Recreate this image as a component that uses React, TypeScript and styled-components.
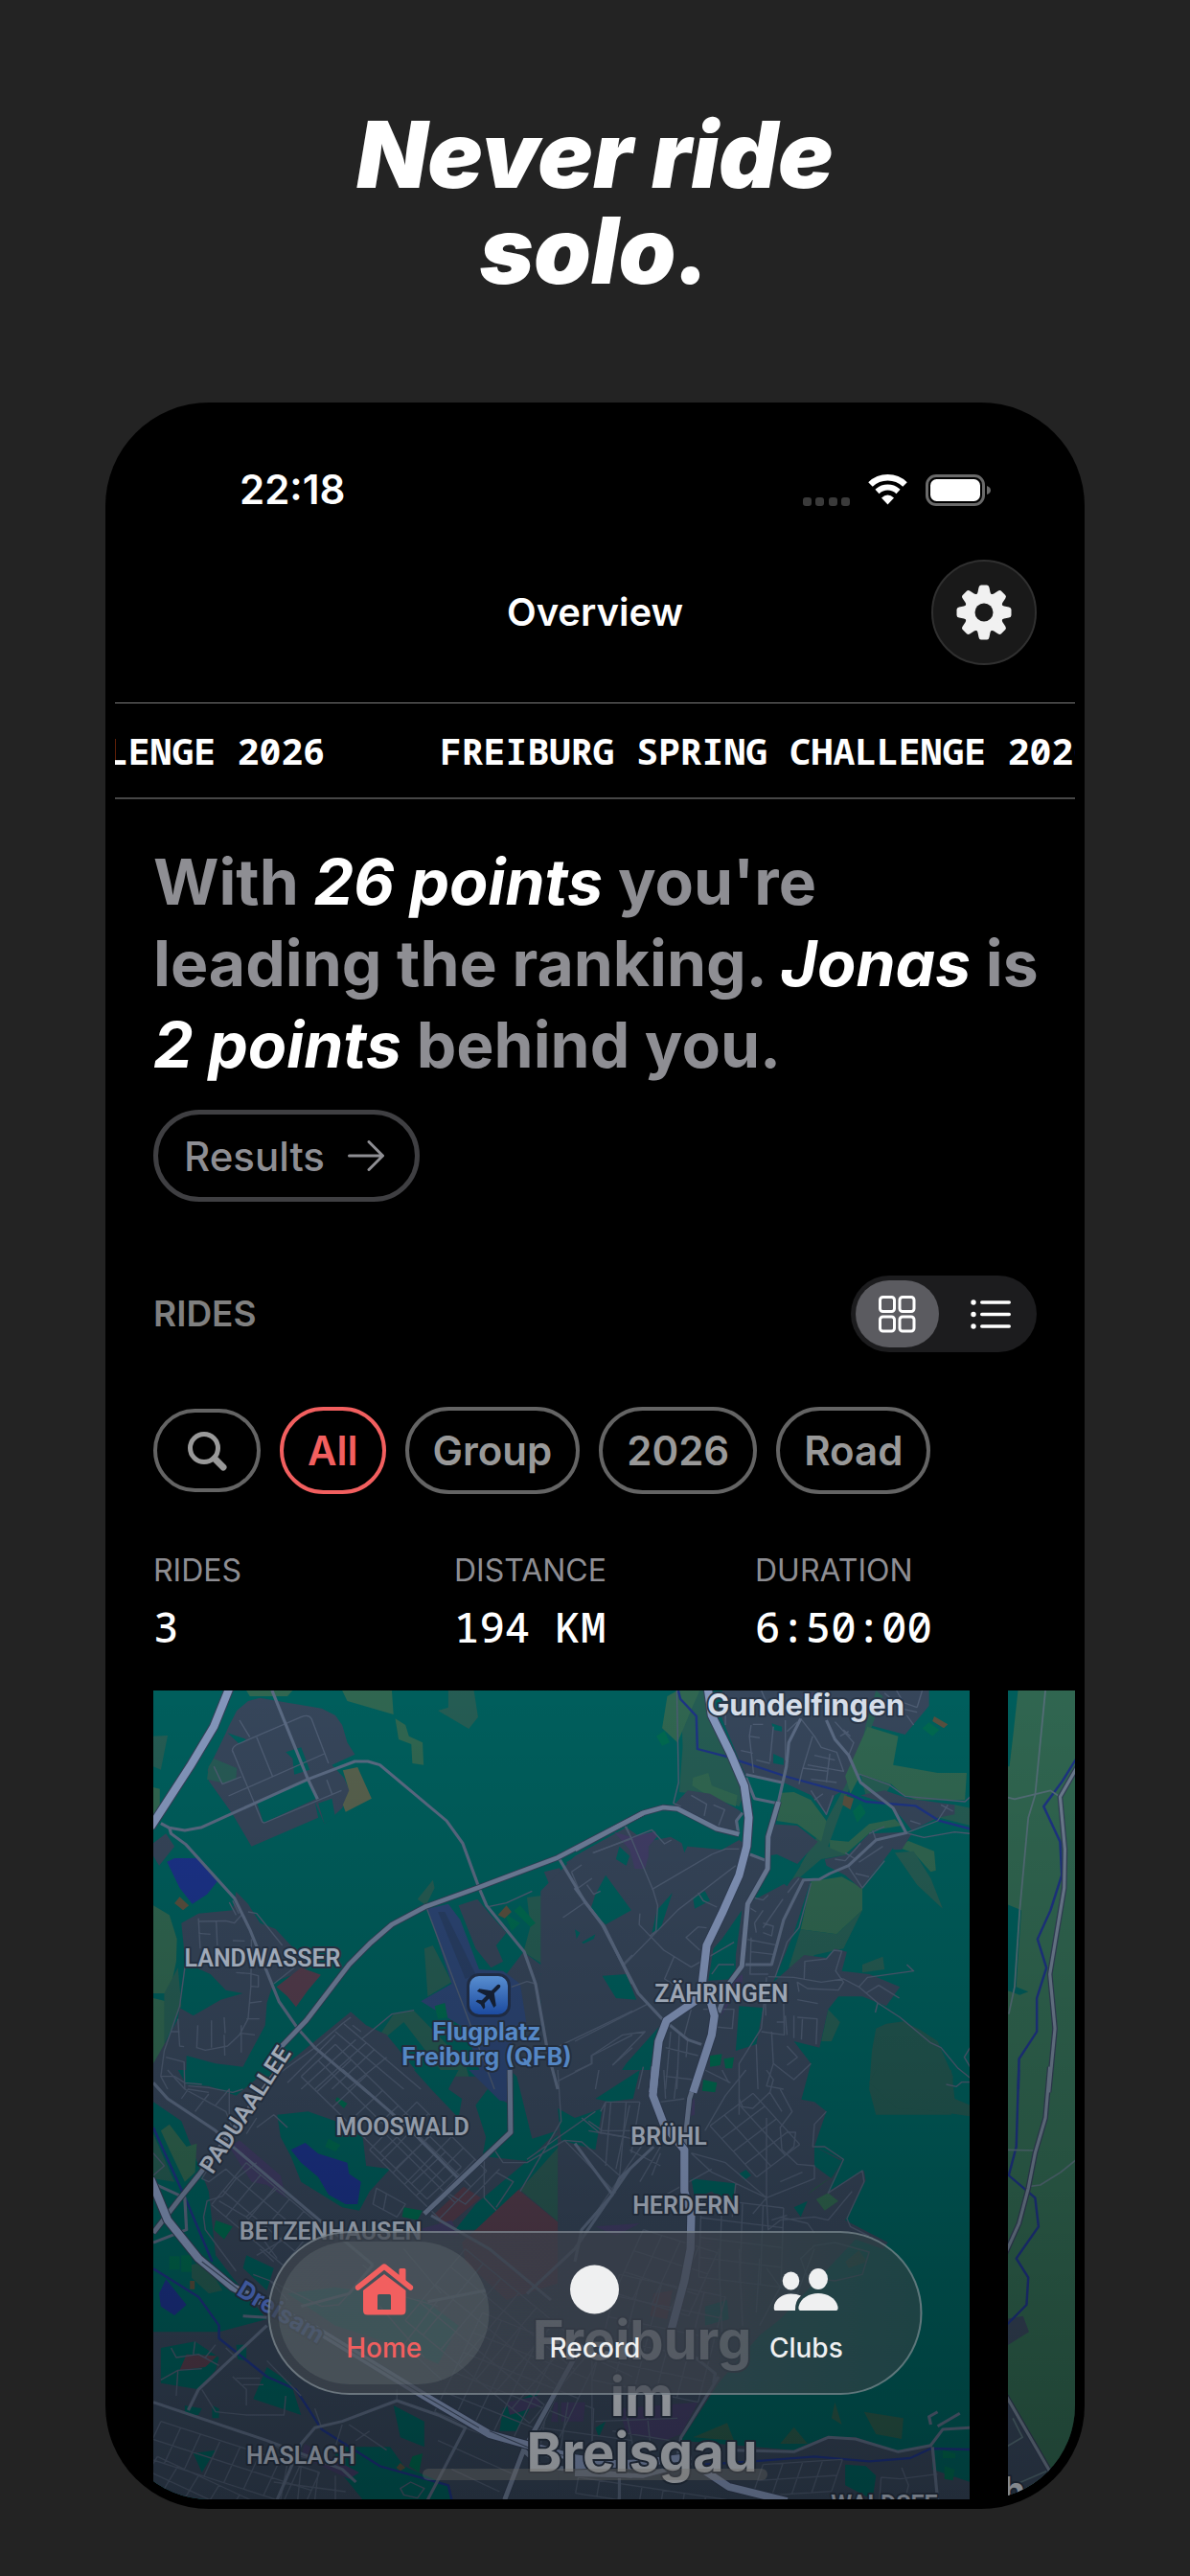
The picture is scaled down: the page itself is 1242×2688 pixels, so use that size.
import React from "react";
import styled, { createGlobalStyle, css } from "styled-components";

const GlobalStyle = createGlobalStyle`
  *, *::before, *::after { box-sizing: border-box; }
  body {
    margin: 0;
    background: #232323;
    color: #fff;
    font-family: Inter, "Liberation Sans", sans-serif;
    -webkit-font-smoothing: antialiased;
  }
  h1, h2, p, dl, dd { margin: 0; }
  button { font: inherit; color: inherit; background: none; border: 0; padding: 0; cursor: pointer; }
  a { color: inherit; text-decoration: none; }
  svg { display: block; }
`;

const gray = "#8e8e93";
const accent = "#f25f5f";
const mono = `"Noto Sans Mono", "DejaVu Sans Mono", "Liberation Mono", monospace`;

/* ---------- Page and device ---------- */

const Page = styled.main`
  display: flex;
  flex-direction: column;
  height: 100vh;
  min-height: 1800px;
  padding: 111px 110px 70px;
  overflow: hidden;
`;

const Headline = styled.h1`
  max-width: 600px;
  margin: 0 auto 109px;
  font-size: 96px;
  font-weight: 900;
  font-style: italic;
  line-height: 100px;
  text-align: center;
`;

const Phone = styled.div`
  flex: 1;
  min-height: 0;
  display: flex;
  padding: 10px;
  border-radius: 108px;
  background: #000;
`;

const Screen = styled.div`
  position: relative;
  flex: 1;
  min-width: 0;
  display: flex;
  flex-direction: column;
  overflow: hidden;
  border-radius: 98px;
`;

/* ---------- Top of the screen ---------- */

const StatusBar = styled.div`
  display: flex;
  align-items: center;
  justify-content: space-between;
  padding: 56px 88px 0 130px;
  font-size: 42px;
  font-weight: 600;
  line-height: 50px;
`;

const StatusIcons = styled.div`
  display: flex;
  align-items: center;
  gap: 19px;
`;

const Header = styled.header`
  display: grid;
  grid-template-columns: 1fr auto 1fr;
  align-items: center;
  padding: 48px 40px 39px;
`;

const Title = styled.h2`
  grid-column: 2;
  font-size: 40px;
  font-weight: 600;
  line-height: 50px;
`;

const RoundButton = styled.button`
  justify-self: end;
  display: grid;
  place-items: center;
  width: 110px;
  height: 110px;
  border: 2px solid #303030;
  border-radius: 50%;
  background: #191919;
`;

const Ticker = styled.div`
  overflow: hidden;
  border-top: 1px solid #7d7d7d;
  border-bottom: 2px solid #464646;
`;

const TickerTrack = styled.div`
  display: flex;
  gap: 120px;
  width: max-content;
  padding: 25px 0;
  transform: translateX(-465px);
  font-family: ${mono};
  font-size: 38px;
  font-weight: 700;
  line-height: 48px;
  white-space: nowrap;
`;

/* ---------- Body ---------- */

const Body = styled.section`
  padding: 44px 40px 0;
`;

const Summary = styled.p`
  margin-right: -20px;
  color: ${gray};
  font-size: 66px;
  font-weight: 700;
  line-height: 85px;

  em { color: #fff; font-style: italic; }
`;

const ResultsButton = styled.button`
  display: inline-flex;
  align-items: center;
  gap: 24px;
  height: 96px;
  margin-top: 25px;
  padding: 0 32px 0 27px;
  border: 5px solid #3f3f42;
  border-radius: 48px;
  color: ${gray};
  font-size: 42px;
  font-weight: 500;
`;

const SectionHead = styled.div`
  display: flex;
  align-items: center;
  justify-content: space-between;
  margin-top: 77px;
`;

const SectionTitle = styled.h2`
  color: #808080;
  font-size: 37px;
  font-weight: 600;
  line-height: 50px;
`;

const Segmented = styled.div`
  display: flex;
  height: 80px;
  border-radius: 40px;
  background: #1c1c1e;
`;

const Segment = styled.button`
  width: 97px;
  padding: 5px;
`;

const Thumb = styled.span<{ $on?: boolean }>`
  display: grid;
  place-items: center;
  height: 70px;
  border-radius: 35px;
  background: ${(p) => (p.$on ? "#5b5b60" : "transparent")};
`;

const Chips = styled.div`
  display: flex;
  align-items: center;
  gap: 20px;
  margin-top: 57px;
`;

const Chip = styled.button<{ $active?: boolean; $icon?: boolean }>`
  display: grid;
  place-items: center;
  height: 91px;
  padding: 0 25px;
  border: 4px solid ${(p) => (p.$active ? accent : "#646464")};
  border-radius: 46px;
  color: ${(p) => (p.$active ? accent : "#999")};
  font-size: 42px;
  font-weight: 600;
  ${(p) =>
    p.$icon &&
    css`
      height: 87px;
      padding: 0 31px;
    `}
`;

const Stats = styled.dl`
  display: grid;
  grid-template-columns: repeat(3, 1fr);
  gap: 20px;
  margin-top: 60px;
`;

const StatLabel = styled.dt`
  color: ${gray};
  font-size: 32px;
  line-height: 40px;
`;

const StatValue = styled.dd`
  margin-top: 13px;
  font-family: ${mono};
  font-size: 44px;
  font-weight: 500;
  line-height: 50px;
`;

const Cards = styled.div`
  flex: 1;
  min-height: 0;
  display: flex;
  gap: 40px;
  margin-top: 42px;
  padding-left: 40px;
  overflow: hidden;
`;

const RideCard = styled.article`
  flex: none;
  width: calc(100% - 110px);
  overflow: hidden;
`;

const MapSvg = styled.svg`
  width: 100%;
  height: auto;
  font-family: Roboto, Inter, sans-serif;
`;

/* ---------- Tab bar ---------- */

const TabBar = styled.nav`
  position: absolute;
  left: 50%;
  bottom: 109px;
  display: flex;
  width: 683px;
  height: 171px;
  padding: 9px;
  transform: translateX(-50%);
  border: 2px solid rgba(170, 185, 190, 0.45);
  border-radius: 86px;
  background: linear-gradient(90deg, rgba(62, 69, 77, 0.7), rgba(60, 65, 75, 0.7) 65%, rgba(42, 66, 68, 0.7));
`;

const Tab = styled.a<{ $active?: boolean }>`
  flex: 1;
  display: flex;
  flex-direction: column;
  align-items: center;
  justify-content: center;
  gap: 17px;
  border-radius: 75px;
  background: ${(p) => (p.$active ? "rgba(125, 140, 140, 0.24)" : "none")};
  color: ${(p) => (p.$active ? accent : "#eff0f1")};
  font-size: 28px;
  font-weight: 500;
  line-height: 32px;
`;

const HomeIndicator = styled.div`
  position: absolute;
  left: 50%;
  bottom: 20px;
  width: 360px;
  height: 12px;
  transform: translateX(-50%);
  border-radius: 6px;
  background: rgba(110, 105, 100, 0.35);
`;

/* ---------- Icons ---------- */

const SignalIcon = () => (
  <svg width="49" height="33" viewBox="0 0 49 33" fill="#3a3a3a">
    {[0, 13, 27, 40].map((x) => (
      <rect key={x} x={x} y="24" width="9" height="9" rx="3" />
    ))}
  </svg>
);

const WifiIcon = () => (
  <svg width="41" height="32" viewBox="0 0 41 32" fill="none" stroke="#fff">
    <path d="M2.5 10.5A26 26 0 0 1 38.500 10.500" strokeWidth="6.500" />
    <path d="M9.500 18A16 16 0 0 1 31.500 18" strokeWidth="6" />
    <path d="M20.500 31.500L14 24.500Q20.500 18.500 27 24.500Z" fill="#fff" stroke="none" />
  </svg>
);

const BatteryIcon = () => (
  <svg width="68" height="33" viewBox="0 0 68 33">
    <rect x="1.500" y="1.500" width="59" height="30" rx="9.500" fill="none" stroke="#6a6a6a" strokeWidth="3" />
    <rect x="5" y="5" width="52" height="23" rx="6.500" fill="#fff" />
    <path d="M64 12Q68 13.500 68 16.500T64 21Z" fill="#6a6a6a" />
  </svg>
);

const GearIcon = () => (
  <svg width="58" height="58" viewBox="-29 -29 58 58" fill="#f1f1f1">
    <circle r="20.500" />
    {[0, 45, 90, 135, 180, 225, 270, 315].map((a) => (
      <path
        key={a}
        transform={`rotate(${a})`}
        d="M-8.500 -18Q-7 -19 -6.500 -21L-5.500 -26Q-5 -28.500 -3 -28.500H3Q5 -28.500 5.500 -26L6.500 -21Q7 -19 8.500 -18Z"
      />
    ))}
    <circle r="9.500" fill="#191919" />
  </svg>
);

const ArrowIcon = () => (
  <svg width="38" height="32" viewBox="0 0 38 32" fill="none" stroke="currentColor" strokeWidth="3" strokeLinecap="round" strokeLinejoin="round">
    <path d="M1.500 16H36M22 1.500L36.500 16L22 30.500" />
  </svg>
);

const GridIcon = () => (
  <svg width="39" height="39" viewBox="0 0 39 39" fill="none" stroke="#fff" strokeWidth="3">
    {[1.5, 22].map((x) => [1.5, 22].map((y) => <rect key={`${x}-${y}`} x={x} y={y} width="15" height="15" rx="3" />))}
  </svg>
);

const ListIcon = () => (
  <svg width="42" height="31" viewBox="0 0 42 31" fill="#fff">
    {[3, 15.5, 28].map((y) => (
      <g key={y}>
        <circle cx="3" cy={y} r="2.700" />
        <rect x="10" y={y - 1.75} width="32" height="3.500" rx="1.750" />
      </g>
    ))}
  </svg>
);

const SearchIcon = () => (
  <svg width="42" height="42" viewBox="0 0 42 42" fill="none" stroke="currentColor" strokeLinecap="round">
    <circle cx="18" cy="18" r="14.500" strokeWidth="5" />
    <path d="M29 29L38 38" strokeWidth="7" />
  </svg>
);

const HomeIcon = () => (
  <svg width="61" height="56" viewBox="0 0 61 56" fill="currentColor">
    <path d="M3 26L30.500 4L58 26" fill="none" stroke="currentColor" strokeWidth="5.500" strokeLinecap="round" strokeLinejoin="round" />
    <path d="M46 14V7.500Q46 6 47.500 6H51.500Q53 6 53 7.500V21Z" />
    <path fillRule="evenodd" d="M8.500 29L30.500 12L53 29V50Q53 54.500 48.500 54.500H13Q8.500 54.500 8.500 50ZM25 33Q23.500 33 23.500 34.500V49H37.500V34.500Q37.500 33 36 33Z" />
  </svg>
);

const RecordIcon = () => (
  <svg width="56" height="56" viewBox="0 0 56 56" fill="currentColor">
    <circle cx="28" cy="28" r="25.500" />
  </svg>
);

const ClubsIcon = () => (
  <svg width="68" height="56" viewBox="0 -6 68 56" fill="currentColor">
    <ellipse cx="18" cy="13" rx="8.800" ry="9.500" />
    <ellipse cx="46.500" cy="11" rx="10" ry="11" />
    <path d="M28 44Q25.500 44 26 40C28 31 37 26 46.500 26C56 26 65 31 67 40Q67.500 44 65 44Z" />
    <path d="M2 44Q0 44 0 41C1 32 9 26.500 18 26.500Q24 26.500 28.500 28.500Q22 34 22.500 44Z" />
  </svg>
);

/* ---------- Map ---------- */

type Sector = "nw" | "ne" | "sw" | "se";
type Shape = [Sector, string, string];
type Line = [Sector, string];

const scale = "scale(0.35714 0.33333)";
const sectorOrigin = (offset: number): Record<Sector, string> => ({
  nw: `translate(${-60 - offset} -24) ${scale}`,
  ne: `translate(${440 - offset} -24) ${scale}`,
  sw: `translate(${-60 - offset} 396) ${scale}`,
  se: `translate(${440 - offset} 396) ${scale}`,
});

/* A skewed block of streets: nu cells along u, nv cells along v. */
const blocks = (ox: number, oy: number, ux: number, uy: number, nu: number, vx: number, vy: number, nv: number) => {
  let d = "";
  for (let i = 0; i <= nu; i++) d += `M${ox + ux * i} ${oy + uy * i}l${vx * nv} ${vy * nv}`;
  for (let j = 0; j <= nv; j++) d += `M${ox + vx * j} ${oy + vy * j}l${ux * nu} ${uy * nu}`;
  return d;
};

const land = "#00605e";
const urban = "#37475c";
const park = "#316852";
const scrub = "#265e55";
const lawn = "#006b51";
const water = "#1c348c";
const airfield = "#2d4777";
const retail = "#423f69";
const campus = "#553e4f";
const rust = "#5a5140";

const areas: Shape[] = [
  // north-west
  ["nw", park, "M720 72H865L870 147L800 125L735 105ZM875 160L905 180L915 215L955 235L958 305L925 300L922 240L885 225ZM440 72H575L560 90H450ZM168 745L215 775L237 850L235 920L215 1020H168ZM168 1035L205 1045L200 1240H168ZM168 375L187 380V440L168 460Z"],
  ["nw", scrub, "M1030 72H1105L1117 155L1090 192L1000 135L1030 125ZM168 215L210 213L190 320L168 310ZM200 1020L240 940L250 1060L200 1180ZM830 1150L870 1085L930 1075L1080 1240L1100 1320H1050L900 1110L850 1155Z"],
  ["nw", urban, "M388 185L412 135L445 105L480 95L560 110L660 128L700 150L720 180L735 235L757 272L690 305L725 345L742 385L720 440L668 490L640 420L650 470L455 560L400 460L330 355L327 320L355 260L380 205ZM205 520L230 560L185 620L168 590V550Z"],
  ["nw", land, "M470 420L620 352L645 410L490 487ZM555 265L600 250L625 320L580 335L575 285ZM650 425L690 410L700 470L715 455L668 490ZM385 205L440 225L420 240Z"],
  ["nw", "#285c57", "M345 285L412 315L410 350L375 362L325 350L330 310Z"],
  ["nw", "#59634f", "M722 322L765 312L806 410L730 452L722 430L740 385Z"],
  ["nw", water, "M208 608L230 597H300L355 670L325 710L282 740L245 690Z"],
  ["nw", rust, "M245 718L272 745L255 760L230 738Z"],
  ["nw", urban, "M410 702L445 740L480 800L525 818L570 870L640 930L580 960L520 985L500 1050L495 1120L430 1250L350 1240L265 1215L262 1400H168V1240L200 1180L240 1100L245 1065L285 1090L365 1040L430 1020L380 1010L335 960L262 925L250 800L300 770L400 760ZM745 1078L790 1120L850 1150L980 1320H500L560 1240Z"],
  ["nw", campus, "M528 1000L600 940L658 962L620 1010L585 1063L560 1030Z"],
  ["nw", scrub, "M960 880L985 870L1040 985L970 1030ZM940 725L985 665L990 690L965 745Z"],
  ["nw", urban, "M1060 745L1115 725L1150 770L1200 830L1170 870L1190 920L1155 940L1110 880ZM1310 640L1355 628L1410 740L1365 780ZM1375 610L1450 560L1505 680L1445 715ZM1445 590L1568 520V600L1500 590ZM1250 890L1300 930L1400 840L1405 755L1490 805L1600 765V1400H1210L1200 960Z"],
  ["nw", airfield, "M970 755L1030 740L1065 790L1120 945L1190 950L1240 990L1258 1110L1215 1130V1320H1140L1080 1130L950 1045L1040 990Z"],
  ["nw", "#294067", "M1000 765L1020 765L1110 960L1080 975Z"],
  ["nw", scrub, "M1260 720L1300 715L1395 780L1400 830L1340 870L1300 925L1250 890L1270 810Z"],
  ["nw", lawn, "M1195 770L1240 800L1215 825ZM1240 745L1285 800L1270 812L1222 762ZM990 1060L1020 1050L1028 1095L1000 1100Z"],
  ["nw", rust, "M1200 745L1215 765L1195 785L1175 775Z"],
  ["nw", land, "M1330 910L1385 980L1330 1010L1300 960ZM1300 1040L1355 1090L1340 1120L1305 1100Z"],
  // north-east
  ["ne", scrub, "M310 72H375L420 190L480 290L500 380L480 435L390 400L305 390L315 250Z"],
  ["ne", park, "M300 72H365L345 120L300 235L255 190L270 90ZM345 345L390 330L400 370L475 400L470 435L395 405L343 370Z"],
  ["ne", urban, "M430 72H1035V120L965 210L860 180L830 290L790 380L760 400L735 460L690 400L610 360L500 340L480 290L430 160Z"],
  ["ne", scrub, "M880 72L900 90L740 560L800 585L720 600L660 655L615 700L735 480L830 290L850 180Z"],
  ["ne", park, "M855 185L945 215L930 305L1060 330H1145L1140 415H1000L960 400L925 365L835 335L805 395L790 340ZM605 392L640 390L690 415L735 480L720 545L650 490L590 480ZM745 540L800 545L860 490L935 475L955 495L870 510L790 585L745 565ZM690 670L780 655L840 690V760L765 835L660 820ZM935 560L975 543L1050 575L1055 635L1040 640L990 580Z"],
  ["ne", scrub, "M660 820L765 835L840 760L785 880L700 900L660 950L625 940ZM935 580L990 575L1040 660L1075 755L1000 680ZM840 930L900 905L905 945L840 955ZM740 1070L775 1110L750 1170H720ZM1110 430L1155 440V495L1065 470ZM835 335L925 365L905 400L850 400Z"],
  ["ne", "#225852", "M880 1130L910 1115L960 1108L1010 1135L1060 1170L1105 1280L1100 1400H880L860 1320L868 1200Z"],
  ["ne", urban, "M570 490L650 495L710 545L650 615L590 585L560 590ZM835 400L905 385L975 410L1110 430V460L1060 470L985 510L955 470L920 430ZM730 600L800 585L860 520L965 515L905 600L835 692L790 650L735 620ZM290 430L330 385L395 395L485 450L470 510L415 500L330 460ZM935 525L985 520L955 570H930Z"],
  ["ne", urban, "M0 590L150 500L210 545L280 530L330 560L430 570L480 540L560 600V640L500 740L590 690L650 655L690 665L640 830L580 985L670 900L740 910L760 880L795 890L780 950L860 960L950 1000L910 1060L840 1030L770 1030L740 1070L715 1190L640 1170L690 1240L650 1400H-100V700Z"],
  ["ne", land, "M505 420L565 425L560 600L510 585ZM470 900L488 760L430 850L405 880L390 980L470 975ZM590 590L660 620L620 685L590 660ZM480 1060L550 1065L530 1180L470 1200ZM80 965L150 960L180 1040L120 1035ZM60 710L90 650L165 760L90 805L45 760ZM345 720L380 700L395 730L350 755ZM240 760L285 705L250 820L225 830ZM0 820L15 830L5 850ZM20 860L60 835L55 850L25 865ZM150 1240L250 1120L230 1400H0L100 1320ZM580 270L610 285V305L580 300ZM575 175L605 185V200L580 195ZM130 560L160 590L150 620L120 600ZM300 500L350 510L320 580Z"],
  ["ne", retail, "M115 515L165 530L235 512L240 530L215 560V590L205 630L175 630L160 570ZM660 85L740 72L720 110L680 105ZM465 980L490 960L490 985L425 1095Z"],
  ["ne", lawn, "M262 198L277 235L255 245L238 215ZM1015 190L1035 172L1065 195L1045 215ZM812 450L835 425L850 455L825 485ZM395 1215L430 1210L425 1245L395 1250ZM435 1225L465 1220L460 1255H440ZM370 1300L415 1300L410 1400H375Z"],
  ["ne", rust, "M787 400L815 410L805 445L782 430ZM1050 153L1090 178L1078 190L1045 168Z"],
  // south-west
  ["sw", urban, "M168 20H1450V1345H168Z"],
  ["sw", land, "M168 100L250 160L330 380L350 580L400 650L500 780L360 820H168ZM240 0H500L410 80L330 50L265 45ZM530 140L620 130L700 160L780 210L790 300L860 310L800 380L770 440L720 430L600 350L570 270L540 210ZM930 0H1060L1030 60L1070 90L1060 150L980 60ZM1110 110L1145 60L1210 110V0L1230 20L1275 215L1350 190L1260 285L1130 270L1140 210ZM1410 150L1490 120L1465 260L1400 220L1240 370L1130 500H1050L1110 420ZM190 870L290 850L360 900L350 940L300 1000L190 980ZM500 930L570 980L600 1080L460 1030ZM870 1050L960 1100V1180L890 1150ZM700 1180L860 1180L900 1240L1030 1300L1040 1345H780L700 1240ZM285 1200L350 1190L310 1260ZM560 700L700 680L960 720L1060 800L1000 920L900 870L700 800ZM440 580L520 620L500 690L430 620ZM1190 1060L1300 1000L1230 1130L1180 1130ZM1460 1100L1490 1120L1480 1150L1458 1145ZM260 1050L310 1060L300 1080H260ZM340 1050L360 1060V1090H340ZM410 860H440V910L415 905Z"],
  ["sw", airfield, "M1090 0H1205V100L1180 95Z"],
  ["sw", "#2a5a55", "M1370 220L1515 385L1390 510L1240 375Z"],
  ["sw", scrub, "M168 200L230 350L168 340Z"],
  ["sw", campus, "M1235 375L1400 520L1430 640L1200 720L1080 600L1070 540ZM985 455L1075 365L1125 400L1020 495ZM265 890L355 895L320 930L245 940Z"],
  ["sw", retail, "M420 220L540 330L555 400L500 360L455 350L390 240ZM1200 1040L1290 1020L1300 1050L1210 1080ZM1340 1040L1440 1030L1430 1110L1330 1100ZM610 1170L770 1260L740 1280L600 1210ZM940 500L1040 470L1060 520Z"],
  ["sw", park, "M190 190L215 170L265 240L295 230L290 320L260 350L220 260Z"],
  ["sw", scrub, "M280 610L320 600L370 690L330 700L280 650Z"],
  ["sw", water, "M570 250L612 228L650 262L735 290L740 325L775 350L765 420L730 420L680 390L650 335L600 290ZM185 700L205 655L265 735L230 768L190 740Z"],
  ["sw", lawn, "M900 430L955 440L940 470L895 460ZM680 215L715 235L700 255L670 240ZM705 85L735 105L725 120L700 95ZM350 470L400 490L375 530L345 500ZM215 583h30v42h-30ZM250 580h30v52h-30ZM925 1210L955 1200L945 1260L915 1240Z"],
  ["sw", rust, "M275 660h14v26h-14ZM890 1230L905 1245L890 1255L878 1245Z"],
  // south-east
  ["se", urban, "M-50 0H560L600 60L650 90L700 100L735 130L700 240L780 280L740 380L845 315L850 345L790 470L915 540L900 560L820 530L600 780L540 830L420 980L310 1160L640 1190L730 1150H820L945 1195L1040 1175L1155 1180V1345H-50Z"],
  ["se", land, "M60 90L190 0L170 90L100 100ZM340 340L470 355L460 430L400 380L350 400ZM790 1235L850 1240L880 1270L870 1345L790 1300ZM480 325L500 312L515 330L495 345ZM640 430L680 410L660 460ZM380 740L445 720L450 780L380 800ZM-50 120L0 150L80 120L60 250L-40 220ZM60 1120L90 1100L70 1150ZM1045 1170H1155V1290L1045 1250ZM700 240L780 285L750 340L700 300Z"],
  ["se", campus, "M230 700L285 690L270 780L220 770Z"],
  ["se", retail, "M130 1060L360 1040L310 1140L260 1160L150 1140ZM-40 1040L30 1040L25 1100H-40ZM60 490L190 480L120 520ZM330 100L350 90V140L320 150Z"],
  ["se", "#225852", "M880 0H1100L1110 90L1155 110V145L1030 125L940 120L860 40Z"],
  ["se", "#2a5a4c", "M770 320L680 390L700 370ZM345 1150L445 1105L465 1160ZM600 1170L640 1118L680 1170ZM760 1040L780 1110L750 1090ZM845 1070L960 1090L955 1155L880 1140ZM790 600L830 565L855 600L800 620Z"],
  ["se", park, "M705 405L740 385L770 410L730 440Z"],
  ["se", lawn, "M375 30L415 40L410 70L372 65ZM1075 1190L1112 1200V1215H1075ZM1080 1240L1110 1250L1105 1285L1080 1280Z"],
];

const rivers: Line[] = [
  ["ne", "M302 72L308 98L355 152L358 255L440 278L620 342L800 395L850 420L995 433L1065 480L1155 505"],
  ["sw", "M168 180L265 410L340 600M168 622L300 710L360 800V840L500 960L585 1000L660 1125L830 1240L1030 1300L1040 1345"],
  ["se", "M380 1235L520 1225L700 1210L860 1225L980 1215L1040 1185L1155 1188"],
];

const lanes: Line[] = [
  ["nw", "M415 240L600 155Q622 145 630 160L680 300M400 262L485 480Q488 490 500 483L718 385M415 240Q395 250 400 265M470 218L517 342M388 402L668 270M420 165L450 218M345 310L370 365L425 342M675 352L690 395M300 785L305 880M262 925L245 1060L200 1200L190 1280L210 1320M300 795L380 793L405 800L430 770M352 795L355 870M455 850L453 1000L445 1100L420 1150L385 1185L320 1198L295 1190L298 1120M338 1105V1190M375 1095L378 1145M445 765L470 770L545 870M300 832L335 835M400 855L435 856M410 955L450 958L475 965V1000L455 998M450 1050L485 1045M440 1100H478M425 1145L465 1150M425 1120V1205M375 1150L377 1215M220 1140H245M240 1100L245 1185L258 1187M205 1220L258 1235L260 1320M190 1280H230L260 1300L310 1305"],
  ["nw", "M1150 748L1200 737L1275 700M1365 783L1430 735M965 748L1165 1320M1215 1000L1260 983L1285 990M530 1275L640 1190L720 1115L745 1095M775 1165L865 1085L930 1073M700 1140L900 1320M725 1115L950 1320M600 1320L760 1165M640 1320L790 1175M690 1320L815 1195M735 1320L850 1220M750 1120L775 1140M560 1300L700 1150M1350 1295L1450 1240V1215L1568 1150M1345 1190L1568 1075M1510 1245L1568 1190M1545 495L1568 540M1390 640L1420 618M1390 640L1410 690L1450 660M1435 680L1455 710L1475 700M1540 930L1568 900M1452 580L1568 535M520 990L580 940M390 735L410 775M400 730L418 770"],
  ["ne", "M298 72L303 360L288 425L310 435M340 400L385 428L378 465M405 430L438 445L420 495M480 568H440L400 585L225 695M150 497L228 695L242 745L237 825L220 840M470 620L300 760L145 930M190 770L188 805L260 885L340 938L465 860M360 705L375 730L415 750M385 815L360 812L325 845L365 885M55 580L225 508L262 552L282 540M290 905L262 975L300 1000"],
  ["ne", "M830 333L920 368L965 403L1140 420L1155 405M968 518L1020 532L1110 515L1155 520M968 518L1060 480L1090 430M980 480L1010 490M1070 430L1105 450M515 180L510 215L522 330M580 185L570 295M510 215L540 220M615 165V290M520 178H550M660 160L700 215L720 250L765 265L785 325L680 305M695 215L665 320L655 365M700 275L760 290M745 270L735 360M690 350L765 360M665 315L740 325M800 275L815 235L760 170M785 195L805 215M775 215L800 200M485 260L520 268M440 80V180M690 385L735 460L755 400M700 415L725 395M940 72L960 110L1000 125M905 80L960 130L1000 140M970 150L990 180M1015 72L1000 125M530 290L570 300M620 200L650 170M545 72L560 110M760 600L790 605L835 550M790 580L820 600M800 625L840 690L905 605M820 645L860 655M830 610L900 560M870 510L880 540M860 520L905 498"],
  ["ne", "M515 845L512 960L565 960M500 850L585 868M515 890L580 898M525 800L530 830M525 800L550 760M550 800L580 810L575 840L550 830M690 675L655 815L620 860L585 970M608 725L550 815M500 745L530 765M520 720L550 728L565 712M565 968L640 970L720 985L785 975L830 1000L885 1050L950 1095L1040 1175L1070 1190L1120 1255L1155 1285M670 975L672 920L735 912L757 885L780 888L762 950L785 985L770 1010L680 1005L650 985L655 1015M830 1000L855 970L990 950L970 930M850 1020L888 995L948 1035M885 1050L878 1080M560 970L545 1130L480 1240V1400M610 1050L612 1150L545 1140M590 1110H610M650 1040L710 1052M650 1095L708 1100L705 1180M575 1140L580 1240L640 1290L690 1240M555 1000L558 1090M615 1090L620 1150M640 1090V1160M665 1100L662 1165M400 960L420 930L465 930M340 1070L320 1150M375 1070L465 1070L460 1130L410 1125M280 1140L265 1320M305 1150L298 1320M330 1160L325 1220M265 1190L360 1215M265 1280L345 1290M0 1170L210 1055M0 1265L48 1240V1215L140 1150L205 1140L110 1245M1155 1190L1138 1220L1155 1250M1085 1305L1115 1312L1130 1298H1155M530 1180L535 1320M620 1185L650 1220L620 1245M580 1240L560 1310L610 1320M380 1260L455 1300M200 1250L185 1320M622 705L655 660"],
  ["sw", blocks(600, 20, 46, 48, 8, 50, -50, 2) + blocks(800, 250, 34, 36, 6, 46, -50, 3) + blocks(440, 290, 42, 38, 5, -34, 44, 3)],
  ["sw", blocks(190, 1100, 58, 20, 8, -24, 56, 2) + blocks(180, 1210, 60, 30, 6, -26, 46, 2) + blocks(1080, 560, 52, 46, 7, -44, 56, 4)],
  ["sw", blocks(1130, 760, 56, 24, 6, -28, 62, 5) + "M250 90L270 60L330 70M290 130L330 75M350 110L390 60V140M270 50L330 55L400 70L430 60M210 0L260 60L380 130L400 185M470 180L520 140L560 180M440 200L470 150M400 185L310 340L330 350L380 310L410 340L370 395L325 410L315 460L320 500L410 630M410 340L470 290M360 410L440 460L530 590M440 460L530 370M480 560L520 600M470 580L550 530M820 370L905 420L880 460L810 420ZM850 385L840 440M168 260L200 300L168 330M1135 270V400L1170 440M1170 320L1220 350L1170 430M1165 250L1190 290H1260L1370 220L1520 385M1370 220L1420 225L1530 330M1440 190L1568 215M1440 160L1480 190H1568M1505 100L1490 300M1560 110L1520 310M1350 0L1360 160L1240 380M1260 280L1460 130M1020 380L1080 420L1180 310M460 640L510 660L560 720M510 660L660 740L710 735L740 700"],
  ["sw", "M190 970L240 940L310 935M240 940L235 1020M290 850L285 890M220 870L235 900L300 890L360 925M320 900L350 860M310 1000L350 1070L440 1080H550L555 1020M400 960L440 1000V1050M410 965H480M430 985H490M380 870L410 900M500 910L600 1020M640 1060L660 1120M500 1160L560 1200L680 1230M880 1000V1040M720 1110L700 1180M740 1110L850 1190M760 1160L800 1130M890 1310L920 1290L960 1310L940 1340L900 1330ZM1080 1120L1200 1170M1000 1160L1230 1270M1040 1250L1180 1320M560 1230L540 1345M600 1240L590 1345M650 1260L640 1345M700 1270V1345M520 1290L730 1320M1320 1050L1290 1230M1380 1040L1350 1240M1450 900V1240M1300 1120L1568 1160M1290 850L1410 880L1568 960M780 610L870 700L1000 740M900 560L1010 700M830 740L960 900M1000 720L900 860L1010 970"],
  ["se", blocks(395, 175, 34, 40, 4, 42, -34, 3) + blocks(370, 400, 60, 8, 4, -2, 62, 4) + blocks(200, 500, 54, 18, 4, -28, 66, 3)],
  ["se", blocks(130, 640, 62, 14, 5, -16, 66, 5) + blocks(550, 1235, 58, -4, 4, -16, 50, 2) + blocks(10, 1275, 62, 10, 7, -8, 50, 1) + "M735 130L700 170L695 240H730L785 280L740 385L840 315L845 350L795 465L805 490L860 520M480 90L490 115L520 120L570 70L580 30L560 0M570 70L605 130M600 60L635 130L600 180L605 250L650 295L700 300V340L560 400L520 450M560 400L440 290L340 260M500 0L440 80L380 190M450 40L430 0M620 195L645 195L640 240L620 260M560 150V400L565 500L600 470L700 460L740 470L810 380M600 460L680 480L700 510M575 470L620 455M600 350L665 320M470 355L460 460M340 260L400 320L560 400M70 0L60 60M90 100L75 200M150 100L130 340M190 100L165 260M90 100H190M75 130L90 100M260 0L265 90M300 0L290 90M250 100L320 90M20 150L70 195L150 210M250 260L225 330M160 250L250 300M250 240L190 350M200 430L400 310M40 480L200 230M680 650L660 590L700 550L760 540L860 570L840 640L760 660ZM700 560L650 700L600 680L560 620M600 680L540 800M420 560L430 820M480 560L490 800M540 590L530 760M955 1245L975 1300L965 1345M895 1275L950 1280L1060 1265M895 1275L890 1345M30 1050L55 1060L50 1180M60 1100L300 1090M150 1070L170 1180M210 1060L220 1170M110 1130L280 1160"],
];

const streets: Line[] = [
  ["nw", "M515 72L620 350L648 412M190 488L215 502L260 510L310 500L460 427L620 350L757 294H795L830 305L1025 480L1072 550L1120 690L1142 745L1252 890L1285 990L1320 1200L1350 1320M215 502L220 520L262 553L405 722L450 820L535 1045L590 1130L640 1190L800 1335M1355 600L1430 735L1485 810L1568 990"],
  ["ne", "M660 160L625 235L618 310L595 420M500 335L605 360M500 345L525 410L592 425M490 455L472 480L478 520M735 165L760 225L800 275L835 360L930 440L968 518L880 540L800 620L745 645L715 663L668 665L610 790L575 930H490M0 690L80 805L185 1020L255 1100L330 1165L370 1180M512 585L560 605"],
  ["sw", "M168 40L210 90L350 190L400 240L620 440L810 610M720 0L860 130L940 210L1065 345M980 455L1150 560L1330 720M600 740L740 700L810 610M970 725L1140 690M500 800L300 1000L270 1065M430 770L500 775M168 1040L500 1160L720 1250L760 1290M530 1345L600 1170L640 1120L720 1100L880 1035L1000 1080L1080 1120L970 1345M168 355L260 400L265 500L168 540M1560 310L1400 560L1260 700"],
  ["se", "M0 230L110 390M230 240L130 340L110 390L20 500L0 600M450 1190L640 1195L740 1150L820 1155L945 1195L1040 1175L1075 1125L1155 1120M1045 1180L1060 1345M1040 1110L1035 1085L1060 1070M1060 1115L1125 1075M420 960L310 1150L300 1210M340 890L410 950L405 980M130 1240V1345"],
];

const arterials: Line[] = [
  ["nw", "M530 1200L615 1105L740 930L800 865L865 805L965 748L1120 688L1350 595L1600 455"],
  ["ne", "M0 570L200 455L258 438L300 442L415 505L480 522M595 420L565 530L563 630L505 740L488 935L450 990L420 1080"],
  ["sw", "M560 -40L300 330L240 410L168 510M1210 0L1212 195L960 450M1420 860L1250 1190L1195 1345M1250 1190L1300 1240L1568 1270"],
  ["se", "M365 -10L335 90L325 190L318 260M0 1265L200 1270L340 1230"],
];

const highways: Line[] = [
  ["nw", "M392 60L345 185L275 310L160 500"],
  ["ne", "M388 60L400 150L455 270L495 370L508 470L502 560L480 650L430 770L385 870L372 990L350 1045L268 1105L245 1170L228 1330M385 1000L408 1090L400 1150L345 1330"],
  ["sw", "M160 340L210 470L300 590L400 680L640 810L960 1020L1150 1140L1250 1170L1400 1215L1568 1240"],
  ["se", "M235 -10L228 80L260 170L320 250V380L340 450L338 560L320 660L280 820M0 1238L200 1230L340 1210M380 1255L450 1305L620 1350"],
];

type LayerProps = { at: Record<Sector, string>; lines: Line[]; color: string; width: number };
const Lines = ({ at, lines, color, width }: LayerProps) => (
  <g fill="none" stroke={color} strokeWidth={width} strokeLinejoin="round">
    {lines.map(([sector, d], i) => (
      <path key={i} transform={at[sector]} d={d} />
    ))}
  </g>
);

const Areas = ({ at, shapes }: { at: Record<Sector, string>; shapes: Shape[] }) => (
  <g>
    {shapes.map(([sector, fill, d], i) => (
      <path key={i} transform={at[sector]} fill={fill} d={d} />
    ))}
  </g>
);

const Shade = ({ id }: { id: string }) => (
  <>
    <defs>
      <linearGradient id={id} x1="0" y1="0" x2="0" y2="1">
        <stop offset="0" stopColor="#000" stopOpacity="0.02" />
        <stop offset="0.5" stopColor="#000" stopOpacity="0.19" />
        <stop offset="1" stopColor="#000" stopOpacity="0.38" />
      </linearGradient>
    </defs>
    <rect width="852" height="844" fill={`url(#${id})`} />
  </>
);

const Place = styled.text<{ $size?: number; $fill?: string }>`
  fill: ${(p) => p.$fill ?? "#b7c2d3"};
  stroke: #2a374a;
  stroke-width: 4px;
  stroke-linejoin: round;
  paint-order: stroke;
  text-anchor: middle;
  font-size: ${(p) => p.$size ?? 25}px;
  font-weight: 600;
`;

const Town = styled(Place)`
  font-family: Inter, sans-serif;
  font-weight: 700;
`;

const districts: [string, number, number][] = [
  ["LANDWASSER", 114, 288],
  ["ZÄHRINGEN", 593, 325],
  ["MOOSWALD", 260, 464],
  ["BRÜHL", 538, 474],
  ["HERDERN", 556, 546],
  ["BETZENHAUSEN", 185, 573],
  ["HASLACH", 154, 807],
  ["WALDSEE", 763, 858],
];

const FreiburgMap = () => {
  const at = sectorOrigin(0);
  return (
    <MapSvg viewBox="0 0 852 844" role="img" aria-label="Map of Freiburg im Breisgau">
      <rect width="852" height="844" fill={land} />
      <Areas at={at} shapes={areas} />
      <Lines at={at} lines={rivers} color="#1e3586" width={7} />
      <Lines at={at} lines={lanes} color="#4f5e75" width={4} />
      <Lines at={at} lines={streets} color="#5c6c85" width={9} />
      <Lines at={at} lines={arterials} color="#34425a" width={19} />
      <Lines at={at} lines={arterials} color="#71829e" width={14} />
      <Lines at={at} lines={highways} color="#34425a" width={29} />
      <Lines at={at} lines={highways} color="#8699bf" width={23} />
      <Lines at={at} lines={[["sw", "M310 600L420 690L640 810L960 1020L1120 1120M1150 1130L1260 1180L1400 1215"]]} color="#42516a" width={3} />

      {districts.map(([name, x, y]) => (
        <Place key={name} x={x} y={y}>
          {name}
        </Place>
      ))}
      <Place $fill="#c3cede" transform="translate(103 442) rotate(-57)">
        PADUAALLEE
      </Place>
      <Town $size={25} $fill="#5578d6" transform="translate(129 656) rotate(31)">
        Dreisam
      </Town>
      <Town $size={31} $fill="#dbe3ef" x={681} y={26}>
        Gundelfingen
      </Town>
      <Town $size={25} $fill="#66a3ee" x={348} y={365}>
        Flugplatz
      </Town>
      <Town $size={25} $fill="#66a3ee" x={348} y={391}>
        Freiburg (QFB)
      </Town>
      <Town $size={56} $fill="#d3d9e1" x={510} y={698}>
        Freiburg
      </Town>
      <Town $size={56} $fill="#d3d9e1" x={510} y={757}>
        im
      </Town>
      <Town $size={56} $fill="#d3d9e1" x={510} y={815}>
        Breisgau
      </Town>

      <defs>
        <linearGradient id="pin" x1="0" y1="0" x2="0" y2="1">
          <stop offset="0" stopColor="#66a5f2" />
          <stop offset="1" stopColor="#2158bd" />
        </linearGradient>
      </defs>
      <g transform="translate(350 318)">
        <rect x="-23" y="-23" width="46" height="46" rx="13" fill="#24334f" />
        <rect x="-20" y="-20" width="40" height="40" rx="10" fill="url(#pin)" />
        <path
          transform="translate(1 0) rotate(45) scale(0.95)"
          fill="#17243c"
          d="M0 -16Q2.200 -16 2.200 -12.500V-5L13 3V6.500L2.200 3V10L6 13V15.500L0 14L-6 15.500V13L-2.200 10V3L-13 6.500V3L-2.200 -5V-12.500Q-2.200 -16 0 -16Z"
        />
      </g>
      <Shade id="shadeFreiburg" />
    </MapSvg>
  );
};

const valleyAreas: Shape[] = [
  ["ne", "#005f5d", "M1260 72H1295L1282 200L1270 310H1260ZM1260 740L1305 760L1290 1000L1325 1015L1300 1025L1260 1010Z"],
  ["se", urban, "M1260 780L1310 770L1327 820L1260 865ZM1260 1035L1385 1250L1420 1400H1260Z"],
];
const valleyRivers: Line[] = [
  ["ne", "M1480 260L1425 355L1370 435L1418 545L1423 650L1390 760L1352 850L1378 940L1350 1035V1140L1298 1225L1296 1320"],
  ["se", "M1297 0L1290 240L1268 330L1345 400L1355 490L1290 590L1325 650L1320 735L1260 800"],
];
const valleyLanes: Line[] = [
  ["ne", "M1375 72L1345 400L1325 470L1300 760L1285 1000L1268 1085M1260 405L1285 412L1390 385L1418 405"],
  ["se", "M1325 365L1360 360L1420 320L1475 272M1260 250L1350 252M1280 1090L1308 1150L1260 1180M1260 1310L1390 1250L1475 1260"],
];
const valleyRoads: Line[] = [
  ["ne", "M1490 270L1418 405L1432 570L1430 690L1388 960L1403 1130L1385 1330"],
  ["se", "M1388 -10L1375 150L1345 260L1325 370L1298 480L1258 575M1260 1020L1390 1260"],
];

const ValleyMap = () => {
  const at = sectorOrigin(452 + 440);
  return (
    <MapSvg viewBox="0 0 852 844" role="img" aria-label="Map of the next ride">
      <rect width="852" height="844" fill={park} />
      <Areas at={at} shapes={valleyAreas} />
      <Lines at={at} lines={valleyRivers} color="#1e3586" width={7} />
      <Lines at={at} lines={valleyLanes} color="#56707a" width={5} />
      <Lines at={at} lines={valleyRoads} color="#34425a" width={16} />
      <Lines at={at} lines={valleyRoads} color="#6f7f92" width={9} />
      <Town $size={38} $fill="#d3d9e1" x={6} y={848}>
        h
      </Town>
      <Shade id="shadeValley" />
    </MapSvg>
  );
};

/* ---------- Screen ---------- */

const challenge = "FREIBURG SPRING CHALLENGE 2026";
const filters = ["All", "Group", "2026", "Road"];
const stats = [
  ["RIDES", "3"],
  ["DISTANCE", "194 KM"],
  ["DURATION", "6:50:00"],
];

export default function App() {
  return (
    <>
      <GlobalStyle />
      <Page>
        <Headline>Never ride solo.</Headline>
        <Phone>
          <Screen>
            <StatusBar>
              <time>22:18</time>
              <StatusIcons>
                <SignalIcon />
                <WifiIcon />
                <BatteryIcon />
              </StatusIcons>
            </StatusBar>

            <Header>
              <Title>Overview</Title>
              <RoundButton aria-label="Settings">
                <GearIcon />
              </RoundButton>
            </Header>

            <Ticker>
              <TickerTrack>
                <span>{challenge}</span>
                <span>{challenge}</span>
              </TickerTrack>
            </Ticker>

            <Body>
              <Summary>
                With <em>26 points</em> you're leading the ranking. <em>Jonas</em> is <em>2 points</em> behind you.
              </Summary>
              <ResultsButton>
                Results
                <ArrowIcon />
              </ResultsButton>

              <SectionHead>
                <SectionTitle>RIDES</SectionTitle>
                <Segmented role="group" aria-label="View">
                  <Segment aria-label="Cards" aria-pressed="true">
                    <Thumb $on>
                      <GridIcon />
                    </Thumb>
                  </Segment>
                  <Segment aria-label="List" aria-pressed="false">
                    <Thumb>
                      <ListIcon />
                    </Thumb>
                  </Segment>
                </Segmented>
              </SectionHead>

              <Chips>
                <Chip $icon aria-label="Search">
                  <SearchIcon />
                </Chip>
                {filters.map((name) => (
                  <Chip key={name} $active={name === "All"}>
                    {name}
                  </Chip>
                ))}
              </Chips>

              <Stats>
                {stats.map(([label, value]) => (
                  <div key={label}>
                    <StatLabel>{label}</StatLabel>
                    <StatValue>{value}</StatValue>
                  </div>
                ))}
              </Stats>
            </Body>

            <Cards>
              <RideCard>
                <FreiburgMap />
              </RideCard>
              <RideCard>
                <ValleyMap />
              </RideCard>
            </Cards>

            <TabBar>
              <Tab href="#home" $active>
                <HomeIcon />
                Home
              </Tab>
              <Tab href="#record">
                <RecordIcon />
                Record
              </Tab>
              <Tab href="#clubs">
                <ClubsIcon />
                Clubs
              </Tab>
            </TabBar>
            <HomeIndicator />
          </Screen>
        </Phone>
      </Page>
    </>
  );
}
